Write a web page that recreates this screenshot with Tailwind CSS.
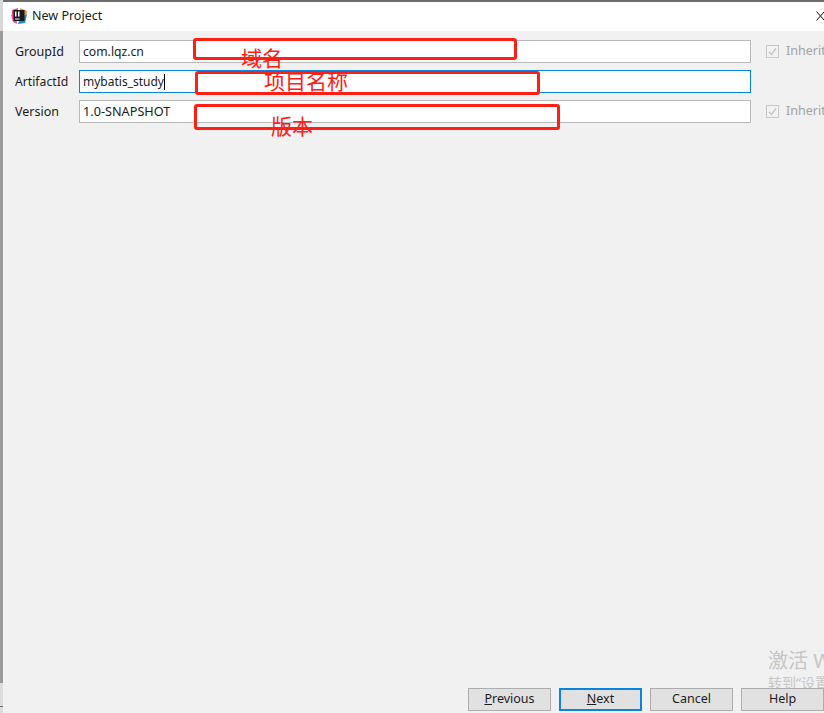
<!DOCTYPE html>
<html lang="zh">
<head>
<meta charset="utf-8">
<script src="https://cdn.jsdelivr.net/npm/@tailwindcss/browser@4"></script>
</head>
<body class="m-0 overflow-hidden bg-white">
<div class="relative flex h-[713px] w-[824px] overflow-hidden font-['Noto_Sans','Noto_Sans_CJK_SC',sans-serif] text-[12.5px] text-[#1c1c1c]">
  <!-- left edge of the window behind -->
  <div class="flex w-[3px] shrink-0 flex-col bg-[#8a8a8a]">
    <div class="h-[31px] bg-[#d8d8d8]"></div>
    <div class="flex-1 bg-[#9a9a9a]"></div>
    <div class="h-[23px] bg-[#dcdcdc]"></div>
    <div class="h-px bg-[#6e6e6e]"></div>
    <div class="h-[6px] bg-[#dcdcdc]"></div>
  </div>
  <div class="flex min-w-0 flex-1 flex-col border-t-2 border-[#6e6e6e] bg-[#f1f1f1]">
    <!-- title bar -->
    <div class="flex h-[29px] shrink-0 items-center bg-white pb-[1px] pl-[8px]">
      <svg class="h-[16px] w-[16px] shrink-0" viewBox="0 0 16 16">
        <path d="M1 2 L7 0 L6 8 L1 9Z" fill="#f0437a"/>
        <path d="M0 7 L5 5 L6 16 L2 14Z" fill="#ee4fa0"/>
        <path d="M9 0 L16 3 L15 9 L10 6Z" fill="#ff8a2a"/>
        <path d="M9 10 L16 6 L14 15 L7 16Z" fill="#1f87e8"/>
        <rect x="2.5" y="2" width="11" height="11" fill="#1a1a1a"/>
        <rect x="4" y="3.5" width="1.5" height="5" fill="#fff"/>
        <rect x="7" y="3.5" width="1.5" height="5" fill="#fff"/>
        <rect x="4" y="10.5" width="4.5" height="1" fill="#fff"/>
      </svg>
      <span class="ml-[5px]">New Project</span>
      <svg class="ml-auto h-[10px] w-[8px] shrink-0" viewBox="0 0 8 10"><path d="M0.5 0.5 L8 9 M0.5 9.5 L8 1" stroke="#111" stroke-width="1" fill="none"/></svg>
    </div>
    <!-- form -->
    <div class="mt-[9px] flex flex-col gap-[7px] pl-[12px]">
      <div class="flex h-[23px] items-center">
        <label class="w-[64px] shrink-0 pt-[2px]">GroupId</label>
        <div class="flex h-full w-[672px] shrink-0 items-center border border-[#b9b9b9] bg-white pt-[1px] pl-[3px] text-[12.2px]">com.lqz.cn</div>
        <span class="ml-[15px] flex h-[13px] w-[13px] shrink-0 items-center justify-center border border-[#c8c8c8] bg-[#f2f2f2]"><svg class="h-[9px] w-[9px]" viewBox="0 0 9 9"><path d="M1 5 L3.5 7.5 L8 1.5" stroke="#c4c4c4" stroke-width="1.3" fill="none"/></svg></span>
        <span class="ml-[7px] whitespace-nowrap text-[#a3a3a3]">Inherit</span>
      </div>
      <div class="flex h-[23px] items-center">
        <label class="w-[64px] shrink-0 pt-[2px] text-[12.2px]">ArtifactId</label>
        <div class="flex h-full w-[672px] shrink-0 items-center border border-[#0a84e0] bg-white pl-[3px] text-[12px]">mybatis_study<span class="h-[16px] w-px bg-black"></span></div>
      </div>
      <div class="flex h-[23px] items-center">
        <label class="w-[64px] shrink-0 pt-[2px]">Version</label>
        <div class="flex h-full w-[672px] shrink-0 items-center border border-[#b9b9b9] bg-white pl-[3px] text-[12.7px]">1.0-SNAPSHOT</div>
        <span class="ml-[15px] flex h-[13px] w-[13px] shrink-0 items-center justify-center border border-[#c8c8c8] bg-[#f2f2f2]"><svg class="h-[9px] w-[9px]" viewBox="0 0 9 9"><path d="M1 5 L3.5 7.5 L8 1.5" stroke="#c4c4c4" stroke-width="1.3" fill="none"/></svg></span>
        <span class="ml-[7px] whitespace-nowrap text-[#a3a3a3]">Inherit</span>
      </div>
    </div>
    <!-- buttons -->
    <div class="relative z-10 mt-auto flex h-[25px] shrink-0 items-start gap-[8px] pl-[465px]">
      <button class="h-[23px] w-[83px] shrink-0 border border-[#adadad] bg-[#e1e1e1]"><u>P</u>revious</button>
      <button class="h-[23px] w-[83px] shrink-0 border-2 border-[#0a84e0] bg-[#e1e1e1]"><u>N</u>ext</button>
      <button class="h-[23px] w-[83px] shrink-0 border border-[#adadad] bg-[#e1e1e1]">Cancel</button>
      <button class="h-[23px] w-[83px] shrink-0 border border-[#adadad] bg-[#e1e1e1]">Help</button>
    </div>
  </div>

  <!-- annotations drawn over the screenshot -->
  <div class="absolute left-[193px] top-[38px] h-[22px] w-[324px] rounded-[3px] border-[3px] border-[#ff2015]"></div>
  <div class="absolute left-[195px] top-[71px] h-[24px] w-[345px] rounded-[3px] border-[3px] border-[#ff2015]"></div>
  <div class="absolute left-[194px] top-[104px] h-[26px] w-[366px] rounded-[3px] border-[3px] border-[#ff2015]"></div>
  <span class="absolute left-[241px] top-[44px] text-[21px] leading-[28px] text-[#ff2015]">域名</span>
  <span class="absolute left-[264px] top-[67px] text-[21px] leading-[28px] text-[#ff2015]">项目名称</span>
  <span class="absolute left-[271px] top-[112px] text-[21px] leading-[28px] text-[#ff2015]">版本</span>

  <!-- Windows activation watermark -->
  <span class="absolute left-[768px] top-[647px] whitespace-nowrap text-[20px] leading-[28px] text-[#c6c6c6]">激活 Windows</span>
  <span class="absolute left-[768px] top-[673px] whitespace-nowrap text-[14px] leading-[20px] text-[#c6c6c6]">转到“设置”</span>
</div>
</body>
</html>
